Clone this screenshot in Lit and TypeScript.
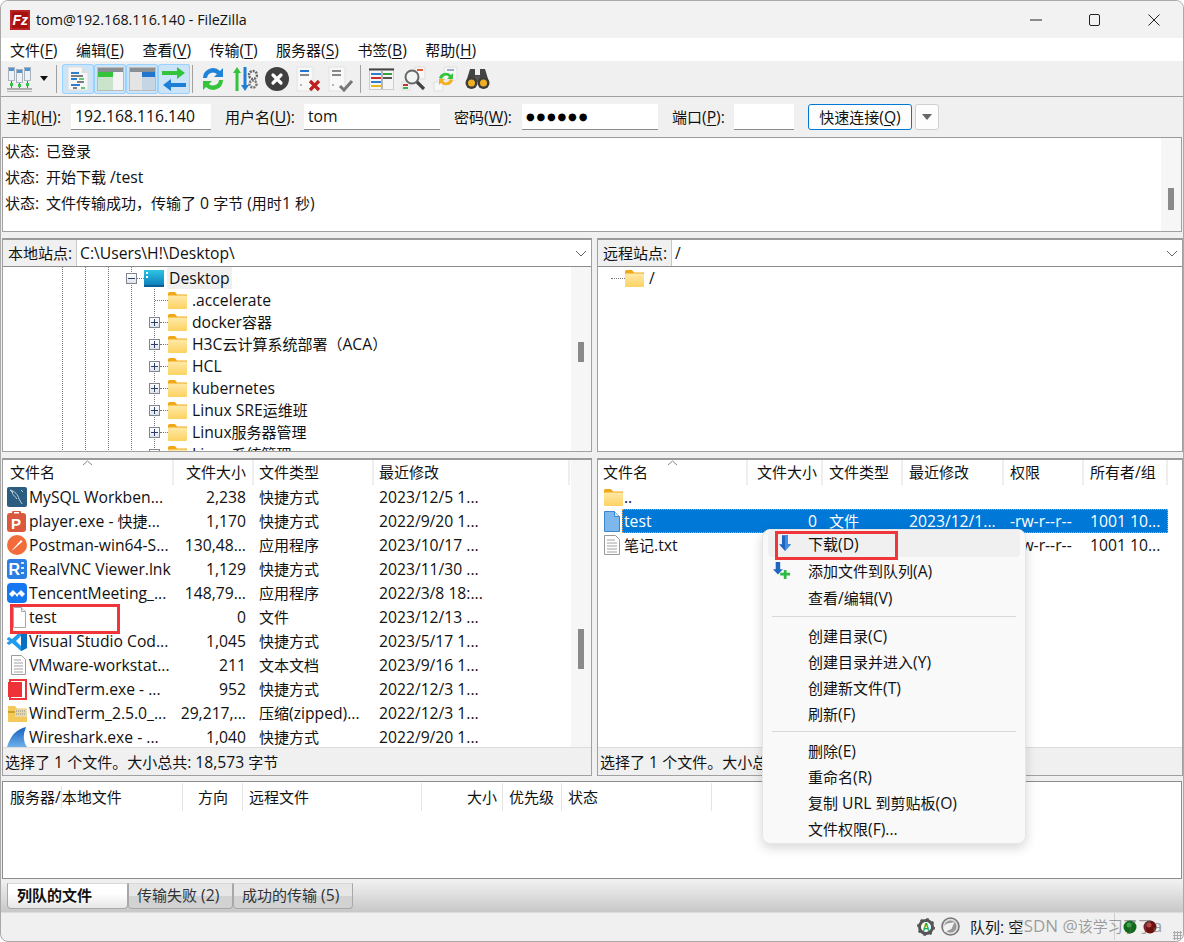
import {LitElement, css, html} from 'lit';
import {customElement} from 'lit/decorators.js';

const I: Record<string, () => unknown> = {
  logo: () => html`<svg class="i" width="20" height="20" viewBox="0 0 20 20"><rect width="20" height="20" fill="#b11414"/><rect x="1" y="1" width="18" height="18" fill="#a80f0f" stroke="#d65050" stroke-width=".6"/><text x="2.5" y="15" font-family="Liberation Sans" font-weight="700" font-style="italic" font-size="14" fill="#fff">Fz</text></svg>`,
  site: () => html`<svg class="i" width="25" height="26" viewBox="0 0 25 26"><g stroke="#9aa5b1" fill="#eef1f5" stroke-width=".8"><rect x="1.5" y="1.5" width="6" height="13"/><rect x="9.5" y="3.5" width="6" height="13"/><rect x="17.5" y="1.5" width="6" height="13"/></g><g fill="#4f94d4"><rect x="2" y="2" width="5" height="3"/><rect x="10" y="4" width="5" height="3"/><rect x="18" y="2" width="5" height="3"/></g><path d="M4.500 15v7M12.500 17v5M20.500 15v7M0 23h25" stroke="#6a6a6a" fill="none"/><g fill="#35c24a"><rect x="3" y="17" width="3" height="3"/><rect x="11" y="18" width="3" height="3"/><rect x="19" y="17" width="3" height="3"/></g><path d="M0 25.500h25" stroke="#bbb"/></svg>`,
  log: () => html`<svg class="i" width="22" height="25" viewBox="0 0 22 25"><path d="M1 1h14l6 6v17H1z" fill="#f6f6f6" stroke="#ddd"/><path d="M15 1v6h6" fill="#ddd"/><path d="M4 7h8M4 13h6M4 19h9" stroke="#2f7fd0" stroke-width="2"/><path d="M4 10h12M10 16h7M6 22h4" stroke="#555" stroke-width="1.600"/><path d="M12 13h5M14 22h4" stroke="#3ab54a" stroke-width="1.600"/></svg>`,
  left: () => html`<svg class="i" width="27" height="24" viewBox="0 0 27 24"><rect x=".5" y=".5" width="26" height="23" fill="#ececec" stroke="#bbb"/><rect x="1" y="1" width="25" height="4" fill="#8a8f94"/><rect x="1" y="5" width="15" height="5" fill="#33c43c"/><rect x="16" y="5" width="10" height="18" fill="#f4f4f4"/><rect x="1" y="10" width="15" height="13" fill="#c9e4cb"/></svg>`,
  right: () => html`<svg class="i" width="27" height="24" viewBox="0 0 27 24"><rect x=".5" y=".5" width="26" height="23" fill="#ececec" stroke="#bbb"/><rect x="1" y="1" width="25" height="4" fill="#8a8f94"/><rect x="13" y="5" width="13" height="5" fill="#2376cd"/><rect x="13" y="10" width="13" height="13" fill="#c6d5e4"/><rect x="1" y="5" width="12" height="18" fill="#e4e4e4"/></svg>`,
  xfer: () => html`<svg class="i" width="26" height="26" viewBox="0 0 26 26"><path d="M1 5h15V1l8 6-8 6V9H1z" fill="#33c43c"/><path d="M25 17H10v-4l-8 6 8 6v-4h15z" fill="#1f7fd8"/></svg>`,
  sync: () => html`<svg class="i" width="26" height="26" viewBox="0 0 26 26"><path d="M3 12A10 10 0 0 1 20 5l3-3v9h-9l3-3A6 6 0 0 0 7 12z" fill="#1f83d8"/><path d="M23 14A10 10 0 0 1 6 21l-3 3v-9h9l-3 3a6 6 0 0 0 10-4z" fill="#33c43c"/></svg>`,
  queue: () => html`<svg class="i" width="26" height="26" viewBox="0 0 26 26"><path d="M5 1l4 6H6.500v18h-3V7H1z" fill="#33c43c"/><path d="M13 25l-4-6h2.500V1h3v18H17z" fill="#1f7fd8"/><circle cx="21" cy="9" r="4" fill="none" stroke="#666" stroke-width="2.500" stroke-dasharray="2 1"/><circle cx="21" cy="18" r="3.500" fill="none" stroke="#777" stroke-width="2.500" stroke-dasharray="2 1"/></svg>`,
  cancel: () => html`<svg class="i" width="26" height="26" viewBox="0 0 26 26"><circle cx="13" cy="13" r="12" fill="#404040"/><path d="M9 9l8 8M17 9l-8 8" stroke="#fff" stroke-width="3.200" stroke-linecap="round"/></svg>`,
  stop: () => html`<svg class="i" width="26" height="26" viewBox="0 0 26 26"><path d="M1 1h16v24H1z" fill="#f8f8f8" stroke="#e2e2e2"/><path d="M4 5h9" stroke="#2376cd" stroke-width="2"/><path d="M4 9h9" stroke="#888" stroke-width="2"/><path d="M4 19h2" stroke="#777"/><path d="M14 15l9 9M23 15l-9 9" stroke="#c02020" stroke-width="3.200"/></svg>`,
  recon: () => html`<svg class="i" width="26" height="26" viewBox="0 0 26 26"><path d="M1 1h16v24H1z" fill="#f8f8f8" stroke="#e2e2e2"/><path d="M4 5h9M4 9h9" stroke="#888" stroke-width="2"/><path d="M4 19h2" stroke="#777"/><path d="M12 20l4 4 8-9" fill="none" stroke="#777" stroke-width="3"/></svg>`,
  cmp: () => html`<svg class="i" width="25" height="22" viewBox="0 0 25 22"><rect x=".5" y=".5" width="24" height="21" fill="#f5f5f5" stroke="#ccc"/><path d="M0 1.500h25" stroke="#444" stroke-width="2"/><path d="M2 6h10M2 14h10" stroke="#2f7fd0" stroke-width="2"/><path d="M2 10h10" stroke="#c83030" stroke-width="2"/><path d="M2 18h10" stroke="#e8b820" stroke-width="2"/><path d="M14 6h9" stroke="#33a33c" stroke-width="2"/><path d="M14 10h9" stroke="#555" stroke-width="2"/><path d="M13 3v18" stroke="#777"/></svg>`,
  find: () => html`<svg class="i" width="25" height="26" viewBox="0 0 25 26"><path d="M14 1h10v12H14z" fill="#f7f7f7" stroke="#ddd"/><path d="M16 4h6" stroke="#e05a30" stroke-width="2"/><path d="M1 16h8v8H1z" fill="#f6f6f6" stroke="#ddd"/><path d="M2 19h5" stroke="#d03030" stroke-width="2"/><path d="M2 22h5" stroke="#3ab54a" stroke-width="2"/><circle cx="11" cy="11" r="6.500" fill="#f2f5f7" fill-opacity=".85" stroke="#666" stroke-width="2"/><path d="M16 16l7 7" stroke="#444" stroke-width="3.200"/></svg>`,
  browse: () => html`<svg class="i" width="25" height="26" viewBox="0 0 25 26"><path d="M11 1h13v13H11z" fill="#f7f7f7" stroke="#e0e0e0"/><path d="M14 4h7" stroke="#9ac" stroke-width="2"/><path d="M1 16h9v9H1z" fill="#f7f7f7" stroke="#e0e0e0"/><path d="M6 12a7 7 0 0 1 12-3l2-2v6h-6l2-2a4 4 0 0 0-7 2z" fill="#33c43c"/><path d="M20 14a7 7 0 0 1-12 3l-2 2v-6h6l-2 2a4 4 0 0 0 7-2z" fill="#f0b020"/></svg>`,
  bino: () => html`<svg class="i" width="25" height="24" viewBox="0 0 25 24"><path d="M5 2h5v6h5V2h5l4 13H1z" fill="#444"/><rect x="10" y="9" width="5" height="6" fill="#555"/><circle cx="6.500" cy="16" r="6" fill="#3d3d3d"/><circle cx="18.500" cy="16" r="6" fill="#3d3d3d"/><circle cx="6.500" cy="16" r="3.500" fill="#f0b020"/><circle cx="18.500" cy="16" r="3.500" fill="#f0b020"/></svg>`,
  folder: () => html`<svg class="i" width="19" height="17" viewBox="0 0 19 17"><path d="M0 1.500Q0 0 1.500 0H7l2 2.500h10V5H0z" fill="#f0a818"/><rect y="3.500" width="19" height="13.500" rx="1" fill="url(#fg)"/><defs><linearGradient id="fg" x1="0" y1="0" x2="0" y2="1"><stop offset="0" stop-color="#ffe9a8"/><stop offset="1" stop-color="#fcd261"/></linearGradient></defs></svg>`,
  desktop: () => html`<svg class="i" width="20" height="17" viewBox="0 0 20 17"><defs><linearGradient id="dg" x1="0" y1="0" x2="0" y2="1"><stop offset="0" stop-color="#2fc4e4"/><stop offset="1" stop-color="#0b78b8"/></linearGradient></defs><rect width="20" height="17" fill="url(#dg)"/><rect x="2" y="2" width="2" height="2" fill="#fff"/><rect x="2" y="6" width="2" height="2" fill="#fff"/><rect y="15" width="20" height="2" fill="#0a5f95"/></svg>`,
  mysql: () => html`<svg class="i" width="20" height="20" viewBox="0 0 20 20"><rect width="20" height="20" rx="2" fill="#2b5d80"/><path d="M3 3c5 1 8 5 9 9l3 5M5 4c0 4 3 5 5 8M14 3l2 2M3 3l3 3" fill="none" stroke="#dfe9f0" stroke-width=".8"/></svg>`,
  player: () => html`<svg class="i" width="20" height="21" viewBox="0 0 20 21"><rect y="2" width="19" height="19" rx="3" fill="#d9583e"/><rect x="5" width="9" height="4" rx="1" fill="#d9583e"/><rect x="7" y="1" width="5" height="1.500" fill="#fff"/><text x="4" y="17.500" font-family="Liberation Sans" font-weight="700" font-size="15" fill="#fff">P</text></svg>`,
  postman: () => html`<svg class="i" width="20" height="20" viewBox="0 0 20 20"><circle cx="10" cy="10" r="10" fill="#f26b3a"/><path d="M6 14l8-9 1.500 1.500-9 8z" fill="#fff"/><path d="M4.500 15.500l1.500-1.500 .6.600z" fill="#fff"/></svg>`,
  vnc: () => html`<svg class="i" width="20" height="20" viewBox="0 0 20 20"><rect width="20" height="20" rx="3" fill="#2a7de1"/><text x="1.500" y="16" font-family="Liberation Sans" font-weight="700" font-size="16" fill="#fff">R</text><path d="M14 4h3M14 9h3M14 14h3" stroke="#cfe3fa" stroke-width="2"/></svg>`,
  meeting: () => html`<svg class="i" width="20" height="20" viewBox="0 0 20 20"><rect width="20" height="20" rx="4" fill="#1678f0"/><path d="M2 11l4-4 4 4 4-4 4 4-3 3-3-3-2 3-2-3-3 3z" fill="#fff"/></svg>`,
  file: () => html`<svg class="i" width="20" height="21" viewBox="0 0 20 21"><path d="M6.500.500h8l4 4v16h-12z" fill="#fff" stroke="#a8a8a8"/><path d="M14.500.500v4h4" fill="#eee" stroke="#a8a8a8"/></svg>`,
  vscode: () => html`<svg class="i" width="20" height="20" viewBox="0 0 20 20"><path d="M14 0l6 3v14l-6 3-9-8-3 2-2-1.500V7.500L2 6l3 2z" fill="#1f9cf0"/><path d="M14 5l-5 5 5 5z" fill="#fff"/><path d="M14 0l6 3v14l-6 3z" fill="#0a6fc0"/><path d="M0 8.500L2.500 10 0 11.500z" fill="#fff"/></svg>`,
  txt: () => html`<svg class="i" width="18" height="20" viewBox="0 0 18 20"><path d="M3.500.500h10l4 4v15h-14z" fill="#fff" stroke="#9a9a9a"/><path d="M6 5h7M6 8h9M6 11h9M6 14h9M6 17h9" stroke="#a0a0a0"/></svg>`,
  wterm: () => html`<svg class="i" width="20" height="21" viewBox="0 0 20 21"><path d="M3 1h16v19H3z" fill="#fff" stroke="#ee3338" stroke-width="2"/><path d="M1 3h14v15H1z" fill="#ee3338"/></svg>`,
  zip: () => html`<svg class="i" width="19" height="17" viewBox="0 0 19 17"><path d="M0 1h7l2 2.500h10V17H0z" fill="#f4c95a"/><path d="M0 6h19v2H0z" fill="#c8a030"/><rect x="7" y="4" width="12" height="8" fill="#e8d9a8"/><path d="M8 6h10M8 9h10" stroke="#888" stroke-dasharray="1 1"/></svg>`,
  shark: () => html`<svg class="i" width="20" height="20" viewBox="0 0 20 20"><defs><linearGradient id="sg" x1="0" y1="0" x2="0" y2="1"><stop offset="0" stop-color="#1560c0"/><stop offset="1" stop-color="#6fb0ea"/></linearGradient></defs><path d="M19 0Q5 3 0 20h20Q14 12 19 0z" fill="url(#sg)"/></svg>`,
  blue: () => html`<svg class="i" width="16" height="21" viewBox="0 0 16 21"><path d="M.5.500h10l5 5v15H.500z" fill="#7db8ec" stroke="#3c86cc"/><path d="M10.500.500v5h5" fill="#cfe4f8" stroke="#3c86cc"/></svg>`,
  txtr: () => html`<svg class="i" width="16" height="20" viewBox="0 0 16 20"><path d="M.5.500h11l4 4v15H.500z" fill="#fff" stroke="#9a9a9a"/><path d="M3 5h8M3 8h10M3 11h10M3 14h10M3 17h10" stroke="#a0a0a0"/></svg>`,
  dl: () => html`<svg class="i" width="12" height="18" viewBox="0 0 16 21"><path d="M4 0h8v12h4l-8 9-8-9h4z" fill="#1f66c0"/><path d="M8 0h4v12h4l-8 9z" fill="#3f8fe0"/></svg>`,
  add: () => html`<svg class="i" width="18" height="18" viewBox="0 0 20 20"><path d="M3 0h5v8h3l-5.500 6L0 8h3z" fill="#1f66c0"/><path d="M12 9h3v3h4v3h-4v4h-3v-4H8v-3h4z" fill="#2cb944"/></svg>`,
  gear: () => html`<svg class="i" width="18" height="18" viewBox="0 0 18 18"><circle cx="9" cy="9" r="6.500" fill="#fff" stroke="#555" stroke-width="3"/><circle cx="9" cy="9" r="8" fill="none" stroke="#555" stroke-width="2" stroke-dasharray="2.500 3.800"/><text x="5.500" y="12.500" font-family="Liberation Sans" font-weight="700" font-size="10" fill="#1faa3c">A</text></svg>`,
  speed: () => html`<svg class="i" width="19" height="19" viewBox="0 0 19 19"><circle cx="9.500" cy="9.500" r="8.500" fill="#ddd" stroke="#777" stroke-width="1.600"/><circle cx="9.500" cy="9.500" r="6" fill="#999"/><path d="M3.500 15A6 6 0 0 1 9.500 6l4-1-3 7z" fill="#f2f2f2"/></svg>`,
  ledG: () => html`<svg class="i" width="14" height="14" viewBox="0 0 14 14"><circle cx="7" cy="7" r="6.500" fill="#0f6b1c"/><circle cx="6" cy="5" r="2.500" fill="#3aa84a"/></svg>`,
  ledR: () => html`<svg class="i" width="14" height="14" viewBox="0 0 14 14"><circle cx="7" cy="7" r="6.500" fill="#6e1010"/><circle cx="6" cy="5" r="2.500" fill="#b84848"/></svg>`,
};

// latin runs sit a touch larger than the CJK ones in the original UI font
const t = (s: string) =>
  s.split(/([\u2E80-\uFFEF]+)/).map((part, i) =>
    i % 2 ? part : part ? html`<span class="lat">${part}</span>` : '');

const m = (label: string, key: string) =>
  html`${label}<span class="lat">(<u>${key}</u>)</span>`;

const localFiles = [
  ['mysql', 'MySQL Workben...', '2,238', '快捷方式', '2023/12/5 1...'],
  ['player', 'player.exe - 快捷...', '1,170', '快捷方式', '2022/9/20 1...'],
  ['postman', 'Postman-win64-S...', '130,48...', '应用程序', '2023/10/17 ...'],
  ['vnc', 'RealVNC Viewer.lnk', '1,129', '快捷方式', '2023/11/30 ...'],
  ['meeting', 'TencentMeeting_...', '148,79...', '应用程序', '2022/3/8 18:...'],
  ['file', 'test', '0', '文件', '2023/12/13 ...'],
  ['vscode', 'Visual Studio Cod...', '1,045', '快捷方式', '2023/5/17 1...'],
  ['txt', 'VMware-workstat...', '211', '文本文档', '2023/9/16 1...'],
  ['wterm', 'WindTerm.exe - ...', '952', '快捷方式', '2022/12/3 1...'],
  ['zip', 'WindTerm_2.5.0_...', '29,217,...', '压缩(zipped)...', '2022/12/3 1...'],
  ['shark', 'Wireshark.exe - ...', '1,040', '快捷方式', '2022/9/20 1...'],
];

const treeFolders = ['docker容器', 'H3C云计算系统部署（ACA）', 'HCL', 'kubernetes', 'Linux SRE运维班', 'Linux服务器管理', 'Linux系统管理'];

@customElement('app-root')
export class AppRoot extends LitElement {
  static styles = css`
    :host {
      display: block;
      position: relative;
      width: 1184px;
      height: 942px;
      box-sizing: border-box;
      border: 1px solid #a9a9a9;
      border-radius: 8px;
      overflow: hidden;
      background: #f0f0f0;
      color: #111;
      font: 15px/20px "Open Sans", "Noto Sans CJK SC", sans-serif;
    }
    .i { display: block; flex: none; }
    .lat { font-size: 15.7px; }
    u { text-underline-offset: 2px; }

    .title { height: 37px; background: #f2f2f2; display: flex; align-items: center; padding-left: 9px; }
    .title .name { margin-left: 6px; font-size: 14.3px; flex: 1; }
    .winbtn { width: 59px; display: flex; justify-content: center; }
    .menubar { height: 23px; background: #fff; display: flex; gap: 18.5px; padding-left: 9px; align-items: center; white-space: nowrap; }
    .toolbar { height: 35px; border-bottom: 1px solid #a0a0a0; box-sizing: content-box; display: flex; align-items: center; padding-left: 6px; }
    .tsep { width: 1px; height: 28px; background: #a0a0a0; flex: none; }
    .s1 { margin: 0 5px; }
    .s2 { margin: 0 4px 0 2px; }
    .s3 { margin: 0 4px 0 3px; }
    .tb { width: 32px; height: 30px; display: flex; align-items: center; justify-content: center; flex: none; }
    .tb.on { background: #cce4f7; box-shadow: inset 0 0 0 1px #99d1ff; border-radius: 3px; }
    .caret { width: 0; height: 0; border: 4px solid transparent; border-top: 5px solid #111; border-bottom: 0; margin: 0 3px 0 8px; }

    .quick { height: 40px; display: flex; align-items: center; padding-left: 5px; white-space: nowrap; }
    .lb { flex: none; }
    .lb1 { width: 58px; }
    .lb2 { width: 72px; }
    .lb3 { width: 61px; }
    .lb4 { width: 55px; }
    .field { height: 26px; box-sizing: border-box; background: #fff; border-bottom: 1px solid #8c8c8c; padding-left: 4px; line-height: 25px; margin-left: 7px; margin-right: 14px; flex: none; }
    .f1 { width: 140px; }
    .f2 { width: 136px; }
    .f3 { width: 136px; font-family: "DejaVu Sans", sans-serif; font-size: 10px; letter-spacing: 1.8px; color: #000; }
    .f4 { width: 60px; }
    .qbtn { height: 26px; box-sizing: border-box; width: 104px; text-align: center; border: 1px solid #0078d7; border-radius: 3px; background: #fdfdfd; line-height: 24px; flex: none; }
    .qdrop { width: 24px; height: 26px; box-sizing: border-box; margin-left: 3px; border: 1px solid #d0d0d0; border-radius: 3px; background: #fdfdfd; display: flex; align-items: center; justify-content: center; }
    .qdrop i { border: 5px solid transparent; border-top: 6px solid #666; border-bottom: 0; }

    .box { background: #fff; border: 1px solid #a0a0a0; border-top: 2px solid #9a9a9a; box-sizing: border-box; }
    .log { height: 95px; margin: 0 1px; display: flex; border-width: 1px; }
    .log .lines { flex: 1; padding-left: 2px; }
    .log .line { height: 26px; line-height: 26px; display: flex; white-space: pre; }
    .log .line b { font-weight: 400; width: 41px; }
    .sb { width: 20px; background: #f6f6f6; display: flex; justify-content: center; flex: none; }
    .sb i { width: 6px; background: #8a8a8a; display: block; }
    .sb.s-log i { height: 22px; margin-top: 50px; }
    .sb.s-tree i { height: 20px; margin-top: 75px; }
    .sb.s-list i { height: 40px; margin-top: 169px; }

    .split { display: grid; grid-template-columns: 590px 586px; column-gap: 5px; padding-left: 1px; margin-top: 6px; }
    .top { height: 214px; display: flex; flex-direction: column; }
    .site { height: 26px; flex: none; display: flex; border-bottom: 1px solid #8c8c8c; box-sizing: content-box; }
    .site .lbl { width: 74px; background: #f0f0f0; border-right: 1px solid #c8c8c8; padding-left: 5px; box-sizing: border-box; line-height: 26px; flex: none; white-space: nowrap; }
    .site .path { flex: 1; padding-left: 3px; line-height: 26px; display: flex; justify-content: space-between; align-items: center; padding-right: 4px; }
    .body { flex: 1; display: flex; min-height: 0; }
    .tree {
      flex: 1; overflow: hidden; white-space: nowrap;
      background-image: linear-gradient(#777 50%, transparent 0), linear-gradient(#777 50%, transparent 0), linear-gradient(#777 50%, transparent 0), linear-gradient(#777 50%, transparent 0);
      background-size: 1px 2px;
      background-repeat: repeat-y;
      background-position: 59px 0, 82px 0, 105px 0, 128px 0;
    }
    .tree.plain { background: none; }
    .kids { background: linear-gradient(#777 50%, transparent 0) 151px 0 / 1px 2px repeat-y; }
    .tr { height: 22px; display: flex; align-items: center; padding-left: 146px; }
    .tr.root { padding-left: 123px; }
    .exp { width: 11px; height: 11px; box-sizing: border-box; border: 1px solid #808590; background: linear-gradient(#fff, #dfe3ea); position: relative; flex: none; }
    .exp::before { content: ""; position: absolute; left: 1px; right: 1px; top: 4px; height: 1px; background: #2c3f6b; }
    .exp.plus::after { content: ""; position: absolute; top: 1px; bottom: 1px; left: 4px; width: 1px; background: #2c3f6b; }
    .dash { border-top: 1px dotted #777; width: 8px; flex: none; }
    .dash.long { width: 13px; margin-left: 6px; }
    .dash.short { width: 7px; }
    .tr .t { margin-left: 5px; }
    .tr .hl { background: #f0f0f0; padding: 0 2px; margin-left: 3px; line-height: 22px; }
    .tr.remote { padding-left: 13px; }
    .tr.remote .dash { width: 14px; }

    .bottom { height: 318px; margin-top: 6px; display: flex; flex-direction: column; }
    .listwrap { flex: 1; display: flex; min-height: 0; }
    .list { flex: 1; min-width: 0; }
    .l-row, .l-head { display: grid; white-space: nowrap; }
    .left { grid-template-columns: 171px 80px 120px 196px; }
    .rite { grid-template-columns: 150px 75px 80px 101px 80px 84px; }
    .l-head { height: 25px; line-height: 25px; }
    .l-head > span { border-right: 2px solid #eee; height: 25px; position: relative; box-sizing: border-box; overflow: hidden; }
    .l-row { height: 24px; line-height: 24px; position: relative; }
    .l-row > span { overflow: hidden; }
    .l-row .n { display: flex; align-items: center; }
    .left .n { padding-left: 4px; }
    .left .n .ic { width: 20px; margin-right: 2px; display: flex; justify-content: center; flex: none; }
    .left .h0 { padding-left: 7px; }
    .ra { text-align: right; }
    .left .ra { padding-right: 8px; }
    .rite .ra { padding-right: 6px; }
    .l-head.left .ra { padding-right: 6px; }
    .l-head.rite .ra { padding-right: 4px; }
    .pl { padding-left: 5px; }
    .rite .pl { padding-left: 6px; }
    .rite .n { padding-left: 6px; }
    .rite .n .ic { width: 20px; flex: none; }
    .rite .h0 { padding-left: 5px; }
    .sort { position: absolute; top: 0; display: block; }
    .sort-l { left: 79px; }
    .sort-r { left: 69px; }
    .sel { color: #fff; background: linear-gradient(#0078d7, #0078d7) 24px 0 / 546px 100% no-repeat; }
    .sel::after { content: ""; position: absolute; left: 24px; width: 546px; top: 0; bottom: 0; box-sizing: border-box; border: 1px dotted #e0a060; }
    .status { height: 27px; flex: none; background: #f0f0f0; border-top: 1px solid #dcdcdc; padding-left: 2px; line-height: 29px; white-space: nowrap; }

    .queue { height: 98px; margin: 5px 1px 0; display: block; border-width: 1px; border-color: #8c8c8c; }
    .q-head { display: grid; grid-template-columns: 180px 60px 179px 81px 59px 150px; height: 27px; line-height: 28px; padding-top: 1px; white-space: nowrap; }
    .q-head span { border-right: 1px solid #e4e4e4; }
    .q-head .ra { padding-right: 14px; text-align: right; }
    .q-head .ra2 { padding-right: 5px; text-align: right; }
    .q-head .p6 { padding-left: 6px; }
    .q-head .p7 { padding-left: 7px; }

    .tabs { margin-top: 2px; height: 31px; background: linear-gradient(#f0f0f0, #c8c8c8); border-bottom: 1px solid #dcdcdc; display: flex; padding-left: 6px; align-items: flex-start; box-sizing: content-box; }
    .tab { height: 26px; box-sizing: border-box; margin-top: 2px; padding-left: 8px; border: 1px solid #a8a8a8; border-top-color: #d8d8d8; border-radius: 0 0 4px 4px; background: linear-gradient(#e6e6e6 50%, #d2d2d2 50%); line-height: 22px; white-space: nowrap; color: #333; }
    .tab.on { padding-left: 9px; background: linear-gradient(#fff 40%, #e6e6e6); font-weight: 700; color: #111; }
    .t1 { width: 121px; }
    .t2 { width: 105px; }
    .t3 { width: 120px; }

    .foot { height: 27px; display: flex; align-items: center; justify-content: flex-end; white-space: nowrap; }
    .foot .q { margin: 0 90px 0 10px; width: 54px; line-height: 26px; }
    .foot .vline { width: 1px; height: 27px; background: #d0d0d0; }
    .foot .leds { display: flex; gap: 6px; margin: 0 26px 0 8px; }
    .foot .g { margin-right: 6px; }

    .menu { position: absolute; left: 761px; top: 528px; width: 264px; box-sizing: border-box; padding-bottom: 1px; background: #f9f9f9; border: 1px solid #e6e6e6; border-radius: 8px; box-shadow: 0 4px 12px rgba(0, 0, 0, .16); }
    .mi { height: 26px; line-height: 26px; margin: 0 5px; padding-left: 40px; position: relative; white-space: nowrap; }
    .mi.first { height: 27px; line-height: 28px; }
    .mi.tall { height: 28px; line-height: 28px; }
    .mi.mid { height: 27px; line-height: 27px; }
    .mi.hover { background: #f0f0f0; border-radius: 4px; }
    .mic { position: absolute; }
    .mic.a { left: 11px; top: 4px; }
    .mic.b { left: 5px; top: 5px; }
    .msep { height: 1px; background: #d8d8d8; margin: 4px 9px 6px; }
    .red { position: absolute; border: 3px solid #f0363a; box-sizing: border-box; pointer-events: none; }
    .r1 { left: 9px; top: 603px; width: 110px; height: 30px; }
    .r2 { left: 774px; top: 530px; width: 123px; height: 29px; }
    .mark { position: absolute; left: 1012px; top: 914px; color: rgba(100, 100, 100, .6); font-size: 15px; line-height: 22px; white-space: nowrap; }
    .mark .lat { font-size: 17px; }
    .grip { position: absolute; right: 1px; bottom: 1px; width: 9px; height: 9px; background: radial-gradient(circle, #aaa 1px, transparent 1.200px) 0 0 / 3px 3px; }
  `;

  render() {
    const tb = (n: string, on = false) => html`<span class="tb ${on ? 'on' : ''}">${I[n]()}</span>`;
    const chev = html`<svg class="i" width="12" height="7" viewBox="0 0 12 7"><path d="M1 1l5 5 5-5" fill="none" stroke="#666"/></svg>`;
    const sort = (c: string) => html`<svg class="sort ${c}" width="11" height="6" viewBox="0 0 11 6"><path d="M1 5l4.500-4 4.500 4" fill="none" stroke="#888"/></svg>`;
    return html`
      <div class="title">
        ${I.logo()}
        <span class="name">tom@192.168.116.140 - FileZilla</span>
        <span class="winbtn"><svg class="i" width="12" height="12" viewBox="0 0 12 12"><path d="M0 6h12" stroke="#222"/></svg></span>
        <span class="winbtn"><svg class="i" width="12" height="12" viewBox="0 0 12 12"><rect x=".5" y=".5" width="10" height="11" rx="1.500" fill="none" stroke="#222"/></svg></span>
        <span class="winbtn"><svg class="i" width="12" height="12" viewBox="0 0 12 12"><path d="M.5.500l11 11M11.500.500l-11 11" stroke="#222"/></svg></span>
      </div>
      <div class="menubar">
        <span>${m('文件', 'F')}</span><span>${m('编辑', 'E')}</span><span>${m('查看', 'V')}</span><span>${m('传输', 'T')}</span><span>${m('服务器', 'S')}</span><span>${m('书签', 'B')}</span><span>${m('帮助', 'H')}</span>
      </div>
      <div class="toolbar">
        ${I.site()}<span class="caret"></span><span class="tsep s1"></span>
        ${tb('log', true)}${tb('left', true)}${tb('right', true)}${tb('xfer', true)}
        <span class="tsep s2"></span>
        ${tb('sync')}${tb('queue')}${tb('cancel')}${tb('stop')}${tb('recon')}
        <span class="tsep s3"></span>
        ${tb('cmp')}${tb('find')}${tb('browse')}${tb('bino')}
      </div>
      <div class="quick">
        <span class="lb lb1">${m('主机', 'H')}<span class="lat">:</span></span><span class="field f1">${t('192.168.116.140')}</span>
        <span class="lb lb2">${m('用户名', 'U')}<span class="lat">:</span></span><span class="field f2">${t('tom')}</span>
        <span class="lb lb3">${m('密码', 'W')}<span class="lat">:</span></span><span class="field f3">●●●●●●</span>
        <span class="lb lb4">${m('端口', 'P')}<span class="lat">:</span></span><span class="field f4"></span>
        <span class="qbtn">${m('快速连接', 'Q')}</span>
        <span class="qdrop"><i></i></span>
      </div>
      <div class="box log">
        <div class="lines">
          <div class="line"><b>${t('状态:')}</b><span>${t('已登录')}</span></div>
          <div class="line"><b>${t('状态:')}</b><span>${t('开始下载 /test')}</span></div>
          <div class="line"><b>${t('状态:')}</b><span>${t('文件传输成功，传输了 0 字节 (用时1 秒)')}</span></div>
        </div>
        <div class="sb s-log"><i></i></div>
      </div>
      <div class="split">
        <div class="box top">
          <div class="site"><span class="lbl">${t('本地站点:')}</span><span class="path"><span>${t('C:\\Users\\H!\\Desktop\\')}</span>${chev}</span></div>
          <div class="body">
            <div class="tree">
              <div class="tr root"><span class="exp"></span><span class="dash short"></span>${I.desktop()}<span class="hl">${t('Desktop')}</span></div>
              <div class="kids">
                <div class="tr"><span class="dash long"></span>${I.folder()}<span class="t">${t('.accelerate')}</span></div>
                ${treeFolders.map((name) => html`<div class="tr"><span class="exp plus"></span><span class="dash"></span>${I.folder()}<span class="t">${t(name)}</span></div>`)}
              </div>
            </div>
            <div class="sb s-tree"><i></i></div>
          </div>
        </div>
        <div class="box top">
          <div class="site"><span class="lbl">${t('远程站点:')}</span><span class="path"><span>${t('/')}</span>${chev}</span></div>
          <div class="body">
            <div class="tree plain">
              <div class="tr remote"><span class="dash"></span>${I.folder()}<span class="t">${t('/')}</span></div>
            </div>
          </div>
        </div>
        <div class="box bottom">
          <div class="listwrap">
            <div class="list">
              <div class="l-head left">
                <span class="h0">文件名${sort('sort-l')}</span><span class="ra">文件大小</span><span class="pl">文件类型</span><span class="pl">最近修改</span>
              </div>
              ${localFiles.map(([ic, n, s, ty, d]) => html`
                <div class="l-row left"><span class="n"><span class="ic">${I[ic]()}</span><span>${t(n)}</span></span><span class="ra">${t(s)}</span><span class="pl">${t(ty)}</span><span class="pl">${t(d)}</span></div>`)}
            </div>
            <div class="sb s-list"><i></i></div>
          </div>
          <div class="status">${t('选择了 1 个文件。大小总共: 18,573 字节')}</div>
        </div>
        <div class="box bottom">
          <div class="listwrap">
            <div class="list">
              <div class="l-head rite">
                <span class="h0">文件名${sort('sort-r')}</span><span class="ra">文件大小</span><span class="pl">文件类型</span><span class="pl">最近修改</span><span class="pl">权限</span><span class="pl">${t('所有者/组')}</span>
              </div>
              <div class="l-row rite"><span class="n"><span class="ic">${I.folder()}</span><span>${t('..')}</span></span></div>
              <div class="l-row rite sel"><span class="n"><span class="ic">${I.blue()}</span><span>${t('test')}</span></span><span class="ra">${t('0')}</span><span class="pl">文件</span><span class="pl">${t('2023/12/1...')}</span><span class="pl">${t('-rw-r--r--')}</span><span class="pl">${t('1001 10...')}</span></div>
              <div class="l-row rite"><span class="n"><span class="ic">${I.txtr()}</span><span>${t('笔记.txt')}</span></span><span class="ra"></span><span class="pl"></span><span class="pl"></span><span class="pl">${t('-rw-r--r--')}</span><span class="pl">${t('1001 10...')}</span></div>
            </div>
          </div>
          <div class="status">${t('选择了 1 个文件。大小总共: 0 字节')}</div>
        </div>
      </div>
      <div class="box queue">
        <div class="q-head">
          <span class="p7">${t('服务器/本地文件')}</span><span class="ra">方向</span><span class="p6">远程文件</span><span class="ra2">大小</span><span class="p6">优先级</span><span class="p6">状态</span>
        </div>
      </div>
      <div class="tabs">
        <span class="tab on t1">列队的文件</span><span class="tab t2">${t('传输失败 (2)')}</span><span class="tab t3">${t('成功的传输 (5)')}</span>
      </div>
      <div class="foot">
        <span class="g">${I.gear()}</span>${I.speed()}
        <span class="q">${t('队列: 空')}</span><span class="vline"></span>
        <span class="leds">${I.ledG()}${I.ledR()}</span>
      </div>
      <div class="grip"></div>

      <div class="menu">
        <div class="mi first hover"><span class="mic a">${I.dl()}</span>${t('下载(D)')}</div>
        <div class="mi tall"><span class="mic b">${I.add()}</span>${t('添加文件到队列(A)')}</div>
        <div class="mi mid">${t('查看/编辑(V)')}</div>
        <div class="msep"></div>
        <div class="mi">${t('创建目录(C)')}</div>
        <div class="mi">${t('创建目录并进入(Y)')}</div>
        <div class="mi">${t('创建新文件(T)')}</div>
        <div class="mi">${t('刷新(F)')}</div>
        <div class="msep"></div>
        <div class="mi">${t('删除(E)')}</div>
        <div class="mi">${t('重命名(R)')}</div>
        <div class="mi">${t('复制 URL 到剪贴板(O)')}</div>
        <div class="mi">${t('文件权限(F)...')}</div>
      </div>
      <div class="red r1"></div>
      <div class="red r2"></div>
      <div class="mark">${t('CSDN @该学习了了a')}</div>
    `;
  }
}
